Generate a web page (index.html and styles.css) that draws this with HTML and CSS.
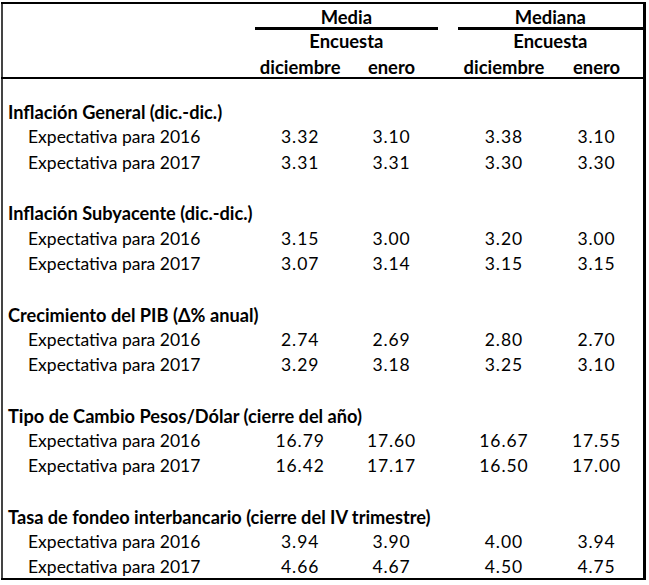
FILE: index.html
```html
<!DOCTYPE html>
<html lang="es">
<head>
<meta charset="utf-8">
<title>Expectativas</title>
<link rel="stylesheet" href="styles.css">
</head>
<body>
<table class="tbl">
  <colgroup>
    <col class="c-label">
    <col class="c-num1">
    <col class="c-num2">
    <col class="c-gap">
    <col class="c-num3">
    <col class="c-num4">
  </colgroup>
  <thead>
    <tr class="h1">
      <th></th>
      <th colspan="2" class="group">Media</th>
      <th></th>
      <th colspan="2" class="group">Mediana</th>
    </tr>
    <tr class="h2">
      <th></th>
      <th colspan="2">Encuesta</th>
      <th></th>
      <th colspan="2">Encuesta</th>
    </tr>
    <tr class="h3">
      <th></th>
      <th>diciembre</th>
      <th>enero</th>
      <th></th>
      <th>diciembre</th>
      <th>enero</th>
    </tr>
  </thead>
  <tbody>
    <tr class="blank first"><td colspan="6"></td></tr>
    <tr class="title"><td colspan="6">Inflación General (dic.-dic.)</td></tr>
    <tr><td class="lbl">Expectativa para 2016</td><td>3.32</td><td>3.10</td><td></td><td>3.38</td><td>3.10</td></tr>
    <tr><td class="lbl">Expectativa para 2017</td><td>3.31</td><td>3.31</td><td></td><td>3.30</td><td>3.30</td></tr>
    <tr class="blank"><td colspan="6"></td></tr>
    <tr class="title"><td colspan="6">Inflación Subyacente (dic.-dic.)</td></tr>
    <tr><td class="lbl">Expectativa para 2016</td><td>3.15</td><td>3.00</td><td></td><td>3.20</td><td>3.00</td></tr>
    <tr><td class="lbl">Expectativa para 2017</td><td>3.07</td><td>3.14</td><td></td><td>3.15</td><td>3.15</td></tr>
    <tr class="blank"><td colspan="6"></td></tr>
    <tr class="title"><td colspan="6">Crecimiento del PIB (Δ% anual)</td></tr>
    <tr><td class="lbl">Expectativa para 2016</td><td>2.74</td><td>2.69</td><td></td><td>2.80</td><td>2.70</td></tr>
    <tr><td class="lbl">Expectativa para 2017</td><td>3.29</td><td>3.18</td><td></td><td>3.25</td><td>3.10</td></tr>
    <tr class="blank"><td colspan="6"></td></tr>
    <tr class="title"><td colspan="6">Tipo de Cambio Pesos/Dólar (cierre del año)</td></tr>
    <tr><td class="lbl">Expectativa para 2016</td><td>16.79</td><td>17.60</td><td></td><td>16.67</td><td>17.55</td></tr>
    <tr><td class="lbl">Expectativa para 2017</td><td>16.42</td><td>17.17</td><td></td><td>16.50</td><td>17.00</td></tr>
    <tr class="blank"><td colspan="6"></td></tr>
    <tr class="title"><td colspan="6">Tasa de fondeo interbancario (cierre del IV trimestre)</td></tr>
    <tr><td class="lbl">Expectativa para 2016</td><td>3.94</td><td>3.90</td><td></td><td>4.00</td><td>3.94</td></tr>
    <tr><td class="lbl">Expectativa para 2017</td><td>4.66</td><td>4.67</td><td></td><td>4.50</td><td>4.75</td></tr>
  </tbody>
</table>
</body>
</html>
```

FILE: styles.css
```css
html, body {
  margin: 0;
  padding: 0;
  background: #fff;
}

body {
  padding: 2px 0 0 1px;
  font-family: Lato, "Open Sans", sans-serif;
  font-size: 17.5px;
  color: #000;
}

.tbl {
  border-collapse: collapse;
  table-layout: fixed;
  width: 645px;
  border-top: 2px solid #000;
  border-left: 2px solid #444;
  border-right: 3px solid #000;
  border-bottom: 2px solid #000;
}

.c-label { width: 252px; }
.c-num1 { width: 90px; }
.c-num2 { width: 92px; }
.c-gap { width: 20px; }
.c-num3 { width: 92px; }
.c-num4 { width: 94px; }

.tbl th,
.tbl td {
  padding: 0;
  text-align: center;
  white-space: nowrap;
  overflow: visible;
  line-height: 20px;
}

.tbl th {
  font-weight: 700;
  font-size: 18.4px;
  box-sizing: border-box;
}

.tbl .h1 th {
  height: 24px;
  padding-top: 3px;
}
.tbl .h1 th.group { border-bottom: 3px solid #000; }
.tbl .h2 th {
  height: 23px;
  padding-top: 1px;
}
.tbl .h3 th {
  height: 22px;
  border-bottom: 2px solid #000;
  padding-top: 5px;
}

.tbl td {
  height: 25.3px;
  box-sizing: border-box;
  padding-top: 2px;
  letter-spacing: 0.9px;
}

.tbl tr.blank td { height: 25.3px; }
.tbl tr.blank.first td { height: 21px; }

.tbl tr.title td {
  text-align: left;
  font-weight: 700;
  font-size: 18.2px;
  letter-spacing: 0;
  padding-left: 5px;
}

.tbl td.lbl {
  text-align: left;
  padding-left: 25px;
  letter-spacing: 0;
}
```
